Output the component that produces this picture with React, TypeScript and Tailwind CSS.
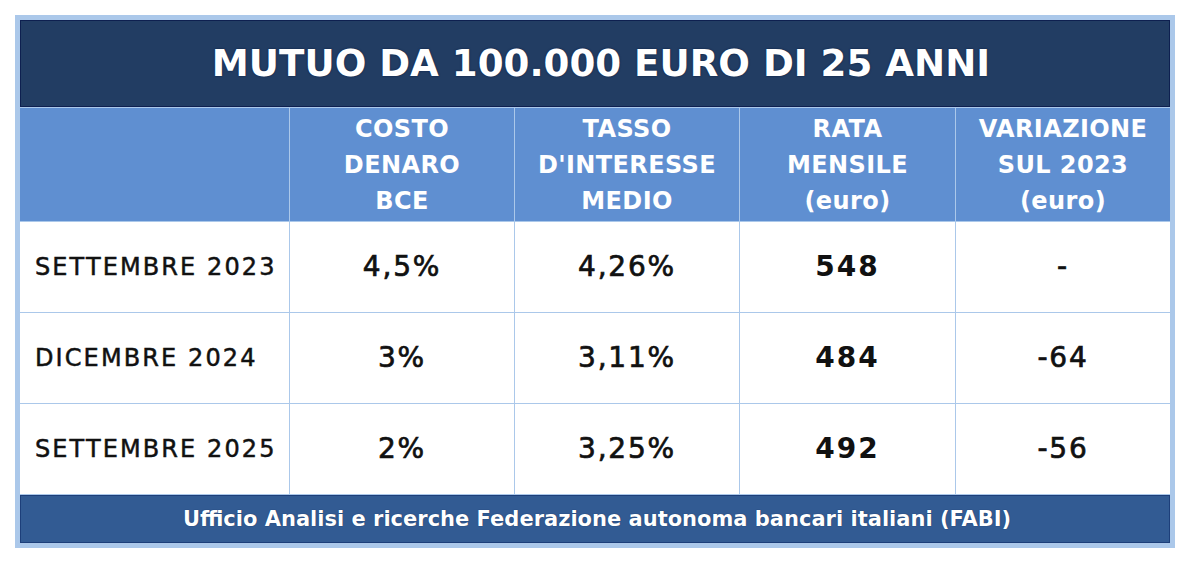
import React from "react";

const rows = [
  { label: "SETTEMBRE 2023", costo: "4,5%", tasso: "4,26%", rata: "548", varia: "-" },
  { label: "DICEMBRE 2024", costo: "3%", tasso: "3,11%", rata: "484", varia: "-64" },
  { label: "SETTEMBRE 2025", costo: "2%", tasso: "3,25%", rata: "492", varia: "-56" },
];

const font = "font-['DejaVu_Sans',sans-serif]";

export default function App() {
  return (
    <div className={`w-[1200px] h-[565px] bg-white pt-[15px] pl-[15px] ${font}`}>
      <div className="w-[1160px] h-[533px] bg-[#abc8ea] p-[5px] flex flex-col gap-px">
        <div className="h-[87px] bg-[#223d63] border border-[#0e2050] flex items-center justify-center pl-[12px]">
          <span className="text-white font-bold text-[37.2px] leading-none [text-shadow:0_0_2px_#07183d]">
            MUTUO DA 100.000 EURO DI 25 ANNI
          </span>
        </div>
        <div className="grid grid-cols-[269px_224px_224px_215px_214px] grid-rows-[113px_90px_90px_90px] gap-px">
          <div className="bg-[#5f8fd1]" />
          {[
            ["COSTO", "DENARO", "BCE"],
            ["TASSO", "D'INTERESSE", "MEDIO"],
            ["RATA", "MENSILE", "(euro)"],
            ["VARIAZIONE", "SUL 2023", "(euro)"],
          ].map((lines, i) => (
            <div
              key={i}
              className="bg-[#5f8fd1] flex flex-col items-center justify-center text-white font-bold text-[24px] leading-[36px] tracking-[0.4px]"
            >
              {lines.map((l) => (
                <span key={l}>{l}</span>
              ))}
            </div>
          ))}
          {rows.map((r) => (
            <React.Fragment key={r.label}>
              <div className="bg-white flex items-center pl-[15px] text-[24px] text-[#111] tracking-[2.1px] leading-none [-webkit-text-stroke:0.5px_#111]">
                {r.label}
              </div>
              <div className="bg-white flex items-center justify-center text-[28px] text-[#111] tracking-[1.8px] leading-none [-webkit-text-stroke:0.7px_#111]">
                {r.costo}
              </div>
              <div className="bg-white flex items-center justify-center text-[28px] text-[#111] tracking-[1.8px] leading-none [-webkit-text-stroke:0.7px_#111]">
                {r.tasso}
              </div>
              <div className="bg-white flex items-center justify-center text-[28px] font-bold text-[#111] tracking-[2px] leading-none">
                {r.rata}
              </div>
              <div className="bg-white flex items-center justify-center text-[28px] text-[#111] tracking-[1.8px] leading-none [-webkit-text-stroke:0.7px_#111]">
                {r.varia}
              </div>
            </React.Fragment>
          ))}
        </div>
        <div className="h-[48px] bg-[#325b93] border border-[#1d3f7a] flex items-center justify-center pl-[4px]">
          <span className="text-white font-bold text-[21px] leading-none [text-shadow:0_0_1px_#0a2150]">
            Ufficio Analisi e ricerche Federazione autonoma bancari italiani (FABI)
          </span>
        </div>
      </div>
    </div>
  );
}
